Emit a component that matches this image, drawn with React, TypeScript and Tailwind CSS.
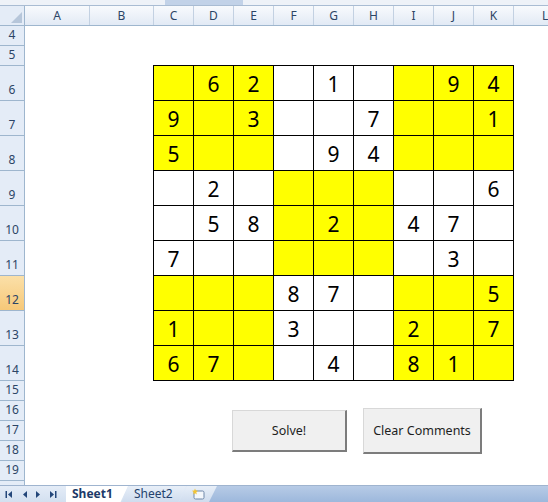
import React from "react";

const BOARD = [
  ".62.1..94",
  "9.3..7..1",
  "5...94...",
  ".2......6",
  ".58.2.47.",
  "7......3.",
  "...87...5",
  "1..3..2.7",
  "67..4.81.",
];

const COLS = [
  { label: "A", w: "w-[65px]" },
  { label: "B", w: "w-[64px]" },
  ...["C", "D", "E", "F", "G", "H", "I", "J", "K"].map((l) => ({ label: l, w: "w-[40px]" })),
];

const ROWS = [
  { n: 4, h: "h-[20px]" },
  { n: 5, h: "h-[20px]" },
  ...[6, 7, 8, 9, 10, 11, 12, 13, 14].map((n) => ({ n, h: "h-[35px]" })),
  ...[15, 16, 17, 18, 19].map((n) => ({ n, h: "h-[20px]" })),
];

const font = "font-['Noto_Sans','Open_Sans',sans-serif]";

function NavArrows() {
  const c = "#24477a";
  return (
    <div className="w-[66px] shrink-0 flex items-center h-full pl-[5px]">
      <svg width="8" height="9" viewBox="0 0 8 9">
        <rect x="0.5" y="1" width="1.5" height="7" fill={c} />
        <path d="M7 1 L3 4.5 L7 8 Z" fill={c} />
      </svg>
      <svg width="8" height="9" viewBox="0 0 8 9" className="ml-[8px]">
        <path d="M6 1 L2 4.5 L6 8 Z" fill={c} />
      </svg>
      <svg width="8" height="9" viewBox="0 0 8 9" className="ml-[5px]">
        <path d="M2 1 L6 4.5 L2 8 Z" fill={c} />
      </svg>
      <svg width="8" height="9" viewBox="0 0 8 9" className="ml-[7px]">
        <path d="M1 1 L5 4.5 L1 8 Z" fill={c} />
        <rect x="6" y="1" width="1.5" height="7" fill={c} />
      </svg>
    </div>
  );
}

export default function App() {
  return (
    <div className={`w-[548px] h-[502px] overflow-hidden bg-white flex flex-col ${font}`}>
      {/* top strip */}
      <div className="h-[6px] shrink-0 bg-[#eef2f8] border-b border-[#a9bcd3] flex">
        <div className="w-[165px]" />
        <div className="w-[78px] bg-[#c2d2e8]" />
      </div>

      {/* column headers */}
      <div className="h-[20px] shrink-0 flex border-b border-[#9eb6ce] bg-gradient-to-b from-[#f8fafd] to-[#e2eaf5] text-[12px] text-[#2c4566]">
        <div className="w-[25px] shrink-0 border-r border-[#9eb6ce] relative bg-[#e4ecf7]">
          <div className="absolute right-[2px] bottom-[2px] w-0 h-0 border-l-[11px] border-l-transparent border-b-[11px] border-b-[#b6c6da]" />
        </div>
        {COLS.map((c) => (
          <div
            key={c.label}
            className={`${c.w} shrink-0 border-r border-[#c3d1e2] flex items-center justify-center`}
          >
            {c.label}
          </div>
        ))}
        <div className="flex-1 pl-[28px] flex items-center">L</div>
      </div>

      {/* body */}
      <div className="flex-1 flex overflow-hidden">
        <div className="w-[25px] shrink-0 border-r border-[#9eb6ce] bg-[#e4ecf7] flex flex-col text-[12px] text-[#2c4566]">
          {ROWS.map((r) => (
            <div
              key={r.n}
              className={`${r.h} shrink-0 border-b border-[#9eb6ce] flex items-end justify-center pb-[1px] ${
                r.n === 12 ? "bg-gradient-to-b from-[#fbe0a8] to-[#f6c878]" : ""
              }`}
            >
              {r.n}
            </div>
          ))}
          <div className="flex-1" />
        </div>

        <div className="flex-1 flex flex-col">
          <div className="mt-[39px] ml-[128px] w-[361px] border-l border-t border-black grid grid-cols-9">
            {BOARD.map((row, r) =>
              row.split("").map((ch, c) => {
                const yellow = (Math.floor(r / 3) + Math.floor(c / 3)) % 2 === 0;
                return (
                  <div
                    key={`${r}-${c}`}
                    className={`h-[35px] border-r border-b border-black flex items-end justify-center pb-[2px] text-[21px] leading-[28px] text-black ${
                      yellow ? "bg-[#ffff00]" : "bg-white"
                    }`}
                  >
                    {ch === "." ? "" : ch}
                  </div>
                );
              })
            )}
          </div>

          <div className="mt-[27px] ml-[207px] flex items-center gap-[16px] text-[12.5px] text-[#1e1e1e]">
            <div className="w-[115px] h-[42px] pt-[1px] bg-[#f0f0f0] border-t border-l border-[#d8d8d8] border-r-2 border-b-2 border-r-[#7c7c7c] border-b-[#7c7c7c] flex items-center justify-center">
              Solve!
            </div>
            <div className="w-[119px] h-[46px] pt-[2px] bg-[#f0f0f0] border-t border-l border-[#d8d8d8] border-r-2 border-b-2 border-r-[#7c7c7c] border-b-[#7c7c7c] flex items-center justify-center">
              Clear Comments
            </div>
          </div>
        </div>
      </div>

      {/* sheet tabs */}
      <div className="h-[17px] shrink-0 flex border-t border-[#9fb4cf] bg-gradient-to-b from-[#e4ecf7] to-[#d3e0f0] text-[12px] leading-none">
        <NavArrows />
        <div className="w-[62px] shrink-0 bg-white flex items-center pl-[6px] font-bold text-[#1c3a68] [clip-path:polygon(0_0,100%_0,88%_100%,0_100%)]">
          Sheet1
        </div>
        <div className="w-[64px] shrink-0 -ml-[6px] flex items-center pl-[12px] text-[#23416d] bg-gradient-to-b from-[#e8eff8] to-[#cfdcee] [clip-path:polygon(10%_0,100%_0,88%_100%,0_100%)]">
          Sheet2
        </div>
        <div className="w-[38px] shrink-0 -ml-[7px] flex items-center pl-[12px] bg-gradient-to-b from-[#e8eff8] to-[#cfdcee] [clip-path:polygon(22%_0,100%_0,80%_100%,0_100%)]">
          <svg width="14" height="12" viewBox="0 0 14 12">
            <rect x="3" y="3" width="10" height="8" rx="1.5" fill="#f4f7fb" stroke="#6f87a8" strokeWidth="1" />
            <path d="M4 0.5 L4.8 2.6 L7 2.8 L5.3 4.2 L5.8 6.4 L4 5.2 L2.2 6.4 L2.7 4.2 L1 2.8 L3.2 2.6 Z" fill="#f5c431" />
          </svg>
        </div>
        <div className="flex-1 -ml-[8px] bg-gradient-to-b from-[#b7cbe6] to-[#9db8dc] [clip-path:polygon(8px_0,100%_0,100%_100%,0_100%)]" />
      </div>
    </div>
  );
}
